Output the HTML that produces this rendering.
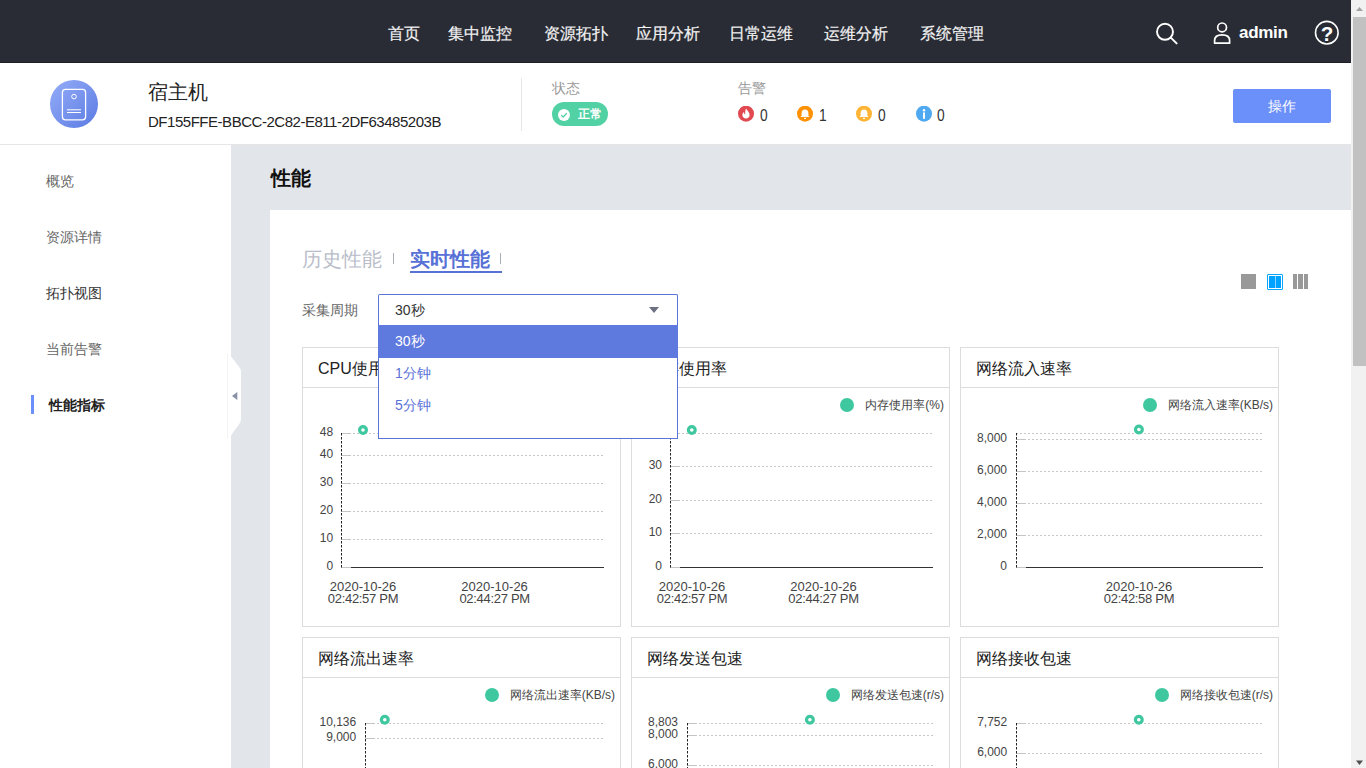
<!DOCTYPE html>
<html><head><meta charset="utf-8">
<style>
*{box-sizing:border-box;margin:0;padding:0}
html,body{width:1366px;height:768px;overflow:hidden;background:#fff;font-family:"Liberation Sans",sans-serif;color:#333}
.a{position:absolute;white-space:nowrap}
#nav{left:0;top:0;width:1351px;height:63px;background:#292c35;border-bottom:1px solid #1e2027;box-shadow:0 1px 2px rgba(0,0,0,0.06)}
.nv{top:23px;font-size:16px;line-height:21px;color:#f2f2f2;font-weight:400;-webkit-text-stroke:0.2px #f2f2f2}
#hdr{left:0;top:63px;width:1351px;height:82px;background:#fff;border-bottom:1px solid #e6e6e6}
#side{left:0;top:145px;width:231px;height:623px;background:#fff}
#main{left:231px;top:145px;width:1120px;height:623px;background:#e2e5ea}
.si{left:46px;font-size:14px;line-height:18px;color:#666}
#panel{left:270px;top:210px;width:1081px;height:558px;background:#fff}
.card{position:absolute;width:319px;height:280px;border:1px solid #dcdcdc;background:#fff}
.card .hd{position:absolute;left:0;top:0;width:317px;height:40px;border-bottom:1px solid #dcdcdc}
.card .tt{position:absolute;left:15px;top:10px;font-size:16px;line-height:21px;color:#222;white-space:nowrap}
.card svg{position:absolute;left:-1px;top:-1px}
#sb{left:1351px;top:0;width:15px;height:768px;background:#f1f1f1}

.leg{font-size:12px;line-height:16px;color:#444;display:flex;align-items:center}
.leg i{display:inline-block;width:14px;height:14px;border-radius:50%;background:#3fc8a0;margin-right:11px}
.yl{font-family:"Liberation Sans",sans-serif;font-size:12px;fill:#444}
.xl{font-family:"Liberation Sans",sans-serif;font-size:13px;fill:#444}
.xl2{font-family:"Liberation Sans",sans-serif;font-size:13px;fill:#444;letter-spacing:-0.3px}
</style></head><body>
<div id="nav" class="a"></div>
<div class="a nv" style="left:388px">首页</div>
<div class="a nv" style="left:448px">集中监控</div>
<div class="a nv" style="left:544px">资源拓扑</div>
<div class="a nv" style="left:636px">应用分析</div>
<div class="a nv" style="left:729px">日常运维</div>
<div class="a nv" style="left:824px">运维分析</div>
<div class="a nv" style="left:920px">系统管理</div>
<svg class="a" style="left:1150px;top:15px" width="40" height="35" viewBox="0 0 40 35">
<circle cx="15" cy="16.8" r="8" fill="none" stroke="#fff" stroke-width="1.9"/>
<line x1="20.8" y1="22.6" x2="26.6" y2="28.4" stroke="#fff" stroke-width="2" stroke-linecap="round"/>
</svg>
<svg class="a" style="left:1210px;top:15px" width="25" height="35" viewBox="0 0 25 35">
<circle cx="12.1" cy="12.4" r="4.4" fill="none" stroke="#fff" stroke-width="1.7"/>
<path d="M4.6 28.2 V25.5 C4.6 21.5 8 19.9 12.1 19.9 C16.2 19.9 19.6 21.5 19.6 25.5 V28.2 Z" fill="none" stroke="#fff" stroke-width="1.7" stroke-linejoin="round"/>
</svg>
<div class="a" style="left:1239px;top:23px;font-size:17px;line-height:20px;font-weight:700;color:#fff;letter-spacing:-0.3px">admin</div>
<svg class="a" style="left:1312px;top:18px" width="30" height="30" viewBox="0 0 30 30">
<circle cx="14.8" cy="14.7" r="11.3" fill="none" stroke="#fff" stroke-width="1.6"/>
<text x="14.9" y="22.7" text-anchor="middle" font-family="Liberation Sans" font-weight="700" font-size="20.5" fill="#fff">?</text>
</svg>

<div id="hdr" class="a"></div>
<div class="a" style="left:50px;top:80px;width:48px;height:48px;border-radius:50%;background:linear-gradient(135deg,#94acf8 0%,#5b7be2 100%)"></div>
<svg class="a" style="left:50px;top:80px" width="48" height="48" viewBox="0 0 48 48">
<rect x="12.4" y="9.4" width="23.2" height="30.4" rx="3" fill="none" stroke="#fff" stroke-width="1.3"/>
<circle cx="24" cy="16.6" r="2.3" fill="none" stroke="#fff" stroke-width="1"/>
<line x1="17" y1="29.8" x2="31" y2="29.8" stroke="#fff" stroke-width="1"/>
<line x1="17" y1="32.5" x2="31" y2="32.5" stroke="#fff" stroke-width="1"/>
</svg>
<div class="a" style="left:148px;top:79px;font-size:20px;line-height:26px;color:#222">宿主机</div>
<div class="a" style="left:148px;top:113px;font-size:15px;line-height:17px;color:#222;letter-spacing:-0.47px">DF155FFE-BBCC-2C82-E811-2DF63485203B</div>
<div class="a" style="left:521px;top:78px;width:1px;height:53px;background:#e6e6e6"></div>
<div class="a" style="left:552px;top:79px;font-size:14px;line-height:18px;color:#999">状态</div>
<div class="a" style="left:552px;top:102px;width:56px;height:24px;border-radius:12px;background:#52d1a4"></div>
<svg class="a" style="left:557px;top:108px" width="14" height="14" viewBox="0 0 14 14">
<circle cx="7" cy="7" r="6" fill="#fff"/>
<path d="M4.2 7.1 L6.2 9 L9.8 5.3" fill="none" stroke="#52d1a4" stroke-width="1.3"/>
</svg>
<div class="a" style="left:578px;top:106px;font-size:12px;line-height:16px;color:#fff;font-weight:700">正常</div>
<div class="a" style="left:738px;top:79px;font-size:14px;line-height:18px;color:#999">告警</div>
<svg class="a" style="left:738px;top:106px" width="220" height="16" viewBox="0 0 220 16">
<circle cx="8" cy="7.7" r="8" fill="#e04950"/>
<path d="M8 2.6 C9.6 5 11.6 6.4 11.6 9 C11.6 11.2 10 12.6 8 12.6 C6 12.6 4.4 11.2 4.4 9 C4.4 7.6 5.2 6.6 6 6 C6 7.4 6.6 8.2 7.2 8.4 C7 6.4 7.4 4.2 8 2.6 Z" fill="#fff"/>
<circle cx="67" cy="7.7" r="8" fill="#ff9103"/>
<path d="M67 3.4 C69.2 3.4 70.4 5 70.4 7.2 V9.8 L71.6 11 H62.4 L63.6 9.8 V7.2 C63.6 5 64.8 3.4 67 3.4 Z M65.8 11.8 H68.2 C68.2 12.6 67.6 13 67 13 C66.4 13 65.8 12.6 65.8 11.8Z" fill="#fff"/>
<circle cx="126" cy="7.7" r="8" fill="#feb435"/>
<path d="M126 3.4 C128.2 3.4 129.4 5 129.4 7.2 V9.8 L130.6 11 H121.4 L122.6 9.8 V7.2 C122.6 5 123.8 3.4 126 3.4 Z M124.8 11.8 H127.2 C127.2 12.6 126.6 13 126 13 C125.4 13 124.8 12.6 124.8 11.8Z" fill="#fff"/>
<circle cx="186" cy="7.7" r="8" fill="#4fa9f1"/>
<circle cx="186" cy="4.3" r="1.2" fill="#fff"/>
<rect x="185" y="6.4" width="2" height="6.4" fill="#fff"/>
</svg>
<div class="a" style="left:760px;top:107px;font-size:16px;line-height:18px;color:#333;transform:scaleX(0.86);transform-origin:0 0">0</div>
<div class="a" style="left:819px;top:107px;font-size:16px;line-height:18px;color:#333;transform:scaleX(0.86);transform-origin:0 0">1</div>
<div class="a" style="left:878px;top:107px;font-size:16px;line-height:18px;color:#333;transform:scaleX(0.86);transform-origin:0 0">0</div>
<div class="a" style="left:937px;top:107px;font-size:16px;line-height:18px;color:#333;transform:scaleX(0.86);transform-origin:0 0">0</div>
<div class="a" style="left:1233px;top:89px;width:98px;height:34px;border-radius:2px;background:#6c90f9;color:#fff;font-size:14px;line-height:34px;text-align:center">操作</div>

<div id="side" class="a"></div>
<div class="a si" style="top:172px">概览</div>
<div class="a si" style="top:228px">资源详情</div>
<div class="a si" style="top:284px;color:#333">拓扑视图</div>
<div class="a si" style="top:340px">当前告警</div>
<div class="a" style="left:31px;top:395px;width:3px;height:19px;background:#6c90f9"></div>
<div class="a si" style="left:49px;top:396px;color:#222;font-weight:700">性能指标</div>

<div id="main" class="a"></div>
<div class="a" style="left:227px;top:353px;width:1px;height:86px;background:#f4f4f4"></div>
<svg class="a" style="left:225px;top:350px" width="20" height="92" viewBox="0 0 20 92">
<path d="M6 6.5 L14.6 17.6 Q16 19.5 16 22 L16 69 Q16 71.5 14.6 73.4 L6 85.5 Z" fill="#fff"/>
<path d="M7 45.9 L12.3 41.9 L12.3 49.9 Z" fill="#8a91a6"/>
</svg>
<div class="a" style="left:271px;top:165px;font-size:20px;line-height:26px;font-weight:700;color:#111">性能</div>

<div id="panel" class="a"></div>
<div class="a" style="left:302px;top:246px;font-size:20px;line-height:26px;color:#b9bdc9">历史性能</div>
<div class="a" style="left:393px;top:253px;width:1px;height:11px;background:#a9adb8"></div>
<div class="a" style="left:410px;top:246px;font-size:20px;line-height:26px;color:#5871d6;font-weight:700">实时性能</div>
<div class="a" style="left:410px;top:271px;width:92px;height:2px;background:#5871d6"></div>
<div class="a" style="left:500px;top:253px;width:1px;height:11px;background:#a9adb8"></div>
<div class="a" style="left:1241px;top:274px;width:15px;height:15px;background:#999"></div>
<div class="a" style="left:1267px;top:274px;width:16px;height:16px;border:1px solid #0aa6ff;border-radius:1px;background:#fff"></div>
<div class="a" style="left:1269px;top:276px;width:6px;height:12px;background:#00a2ff"></div>
<div class="a" style="left:1276px;top:276px;width:5px;height:12px;background:#00a2ff"></div>
<div class="a" style="left:1275px;top:276px;width:1px;height:12px;background:#8fd3ff"></div>
<div class="a" style="left:1293px;top:274px;width:4px;height:15px;background:#999"></div>
<div class="a" style="left:1298px;top:274px;width:5px;height:15px;background:#999"></div>
<div class="a" style="left:1304px;top:274px;width:4px;height:15px;background:#999"></div>
<div class="a" style="left:302px;top:301px;font-size:14px;line-height:18px;color:#666">采集周期</div>
<div class="card" style="left:302px;top:347px"><div class="hd"></div><div class="tt">CPU使用率</div></div>
<div class="a leg" style="right:751px;top:397px"><i></i>CPU使用率(%)</div>
<div class="card" style="left:631px;top:347px"><div class="hd"></div><div class="tt">内存使用率</div></div>
<div class="a leg" style="right:422px;top:397px"><i></i>内存使用率(%)</div>
<div class="card" style="left:960px;top:347px"><div class="hd"></div><div class="tt">网络流入速率</div></div>
<div class="a leg" style="right:93px;top:397px"><i></i>网络流入速率(KB/s)</div>
<div class="card" style="left:302px;top:637px"><div class="hd"></div><div class="tt">网络流出速率</div></div>
<div class="a leg" style="right:751px;top:687px"><i></i>网络流出速率(KB/s)</div>
<div class="card" style="left:631px;top:637px"><div class="hd"></div><div class="tt">网络发送包速</div></div>
<div class="a leg" style="right:422px;top:687px"><i></i>网络发送包速(r/s)</div>
<div class="card" style="left:960px;top:637px"><div class="hd"></div><div class="tt">网络接收包速</div></div>
<div class="a leg" style="right:93px;top:687px"><i></i>网络接收包速(r/s)</div>
<svg class="a" style="left:0;top:0" width="1351" height="768" viewBox="0 0 1351 768">
<line x1="341" y1="433.5" x2="603" y2="433.5" stroke="#c8c8c8" stroke-width="1" stroke-dasharray="2 2"/>
<line x1="341" y1="433.5" x2="351" y2="433.5" stroke="#c4c4c4" stroke-width="1"/>
<text x="333.2" y="436" text-anchor="end" class="yl">48</text>
<line x1="341" y1="455.5" x2="603" y2="455.5" stroke="#c8c8c8" stroke-width="1" stroke-dasharray="2 2"/>
<line x1="341" y1="455.5" x2="351" y2="455.5" stroke="#c4c4c4" stroke-width="1"/>
<text x="333.2" y="458" text-anchor="end" class="yl">40</text>
<line x1="341" y1="483.5" x2="603" y2="483.5" stroke="#c8c8c8" stroke-width="1" stroke-dasharray="2 2"/>
<line x1="341" y1="483.5" x2="351" y2="483.5" stroke="#c4c4c4" stroke-width="1"/>
<text x="333.2" y="486" text-anchor="end" class="yl">30</text>
<line x1="341" y1="511.5" x2="603" y2="511.5" stroke="#c8c8c8" stroke-width="1" stroke-dasharray="2 2"/>
<line x1="341" y1="511.5" x2="351" y2="511.5" stroke="#c4c4c4" stroke-width="1"/>
<text x="333.2" y="514" text-anchor="end" class="yl">20</text>
<line x1="341" y1="539.5" x2="603" y2="539.5" stroke="#c8c8c8" stroke-width="1" stroke-dasharray="2 2"/>
<line x1="341" y1="539.5" x2="351" y2="539.5" stroke="#c4c4c4" stroke-width="1"/>
<text x="333.2" y="542" text-anchor="end" class="yl">10</text>
<line x1="341" y1="567.5" x2="351" y2="567.5" stroke="#c4c4c4" stroke-width="1"/>
<line x1="351" y1="567.5" x2="604" y2="567.5" stroke="#333" stroke-width="1.1"/>
<text x="333.2" y="570" text-anchor="end" class="yl">0</text>
<line x1="341.5" y1="433" x2="341.5" y2="568" stroke="#222" stroke-width="1" stroke-dasharray="2.5 1.5"/>
<text x="363" y="591" text-anchor="middle" class="xl">2020-10-26</text>
<text x="363" y="603" text-anchor="middle" class="xl2">02:42:57 PM</text>
<text x="494.6" y="591" text-anchor="middle" class="xl">2020-10-26</text>
<text x="494.6" y="603" text-anchor="middle" class="xl2">02:44:27 PM</text>
<circle cx="363" cy="430" r="3.4" fill="#fff" stroke="#3fc8a0" stroke-width="3.2"/>
<line x1="670" y1="433.5" x2="932" y2="433.5" stroke="#c8c8c8" stroke-width="1" stroke-dasharray="2 2"/>
<line x1="670" y1="433.5" x2="680" y2="433.5" stroke="#c4c4c4" stroke-width="1"/>
<text x="662" y="436" text-anchor="end" class="yl">40</text>
<line x1="670" y1="466.5" x2="932" y2="466.5" stroke="#c8c8c8" stroke-width="1" stroke-dasharray="2 2"/>
<line x1="670" y1="466.5" x2="680" y2="466.5" stroke="#c4c4c4" stroke-width="1"/>
<text x="662" y="469" text-anchor="end" class="yl">30</text>
<line x1="670" y1="500.5" x2="932" y2="500.5" stroke="#c8c8c8" stroke-width="1" stroke-dasharray="2 2"/>
<line x1="670" y1="500.5" x2="680" y2="500.5" stroke="#c4c4c4" stroke-width="1"/>
<text x="662" y="503" text-anchor="end" class="yl">20</text>
<line x1="670" y1="533.5" x2="932" y2="533.5" stroke="#c8c8c8" stroke-width="1" stroke-dasharray="2 2"/>
<line x1="670" y1="533.5" x2="680" y2="533.5" stroke="#c4c4c4" stroke-width="1"/>
<text x="662" y="536" text-anchor="end" class="yl">10</text>
<line x1="670" y1="567.5" x2="680" y2="567.5" stroke="#c4c4c4" stroke-width="1"/>
<line x1="680" y1="567.5" x2="933" y2="567.5" stroke="#333" stroke-width="1.1"/>
<text x="662" y="570" text-anchor="end" class="yl">0</text>
<line x1="670.5" y1="433" x2="670.5" y2="568" stroke="#222" stroke-width="1" stroke-dasharray="2.5 1.5"/>
<text x="692" y="591" text-anchor="middle" class="xl">2020-10-26</text>
<text x="692" y="603" text-anchor="middle" class="xl2">02:42:57 PM</text>
<text x="823.5" y="591" text-anchor="middle" class="xl">2020-10-26</text>
<text x="823.5" y="603" text-anchor="middle" class="xl2">02:44:27 PM</text>
<circle cx="691.8" cy="430" r="3.4" fill="#fff" stroke="#3fc8a0" stroke-width="3.2"/>
<line x1="1016" y1="433.5" x2="1262" y2="433.5" stroke="#c8c8c8" stroke-width="1" stroke-dasharray="2 2"/>
<line x1="1016" y1="439.5" x2="1262" y2="439.5" stroke="#c8c8c8" stroke-width="1" stroke-dasharray="2 2"/>
<line x1="1016" y1="439.5" x2="1026" y2="439.5" stroke="#c4c4c4" stroke-width="1"/>
<text x="1007" y="442" text-anchor="end" class="yl">8,000</text>
<line x1="1016" y1="471.5" x2="1262" y2="471.5" stroke="#c8c8c8" stroke-width="1" stroke-dasharray="2 2"/>
<line x1="1016" y1="471.5" x2="1026" y2="471.5" stroke="#c4c4c4" stroke-width="1"/>
<text x="1007" y="474" text-anchor="end" class="yl">6,000</text>
<line x1="1016" y1="503.5" x2="1262" y2="503.5" stroke="#c8c8c8" stroke-width="1" stroke-dasharray="2 2"/>
<line x1="1016" y1="503.5" x2="1026" y2="503.5" stroke="#c4c4c4" stroke-width="1"/>
<text x="1007" y="506" text-anchor="end" class="yl">4,000</text>
<line x1="1016" y1="535.5" x2="1262" y2="535.5" stroke="#c8c8c8" stroke-width="1" stroke-dasharray="2 2"/>
<line x1="1016" y1="535.5" x2="1026" y2="535.5" stroke="#c4c4c4" stroke-width="1"/>
<text x="1007" y="538" text-anchor="end" class="yl">2,000</text>
<line x1="1016" y1="567.5" x2="1026" y2="567.5" stroke="#c4c4c4" stroke-width="1"/>
<line x1="1026" y1="567.5" x2="1263" y2="567.5" stroke="#333" stroke-width="1.1"/>
<text x="1007" y="570" text-anchor="end" class="yl">0</text>
<line x1="1016.5" y1="433" x2="1016.5" y2="568" stroke="#222" stroke-width="1" stroke-dasharray="2.5 1.5"/>
<text x="1139" y="591" text-anchor="middle" class="xl">2020-10-26</text>
<text x="1139" y="603" text-anchor="middle" class="xl2">02:42:58 PM</text>
<circle cx="1138.9" cy="429.5" r="3.4" fill="#fff" stroke="#3fc8a0" stroke-width="3.2"/>
<line x1="365" y1="723.5" x2="604" y2="723.5" stroke="#c8c8c8" stroke-width="1" stroke-dasharray="2 2"/>
<line x1="365" y1="723.5" x2="375" y2="723.5" stroke="#c4c4c4" stroke-width="1"/>
<text x="356.2" y="726" text-anchor="end" class="yl">10,136</text>
<line x1="365" y1="738.5" x2="604" y2="738.5" stroke="#c8c8c8" stroke-width="1" stroke-dasharray="2 2"/>
<line x1="365" y1="738.5" x2="375" y2="738.5" stroke="#c4c4c4" stroke-width="1"/>
<text x="356.2" y="741" text-anchor="end" class="yl">9,000</text>
<line x1="365.5" y1="723" x2="365.5" y2="768" stroke="#222" stroke-width="1" stroke-dasharray="2.5 1.5"/>
<circle cx="384.8" cy="719.7" r="3.4" fill="#fff" stroke="#3fc8a0" stroke-width="3.2"/>
<line x1="687" y1="723.5" x2="933" y2="723.5" stroke="#c8c8c8" stroke-width="1" stroke-dasharray="2 2"/>
<line x1="687" y1="723.5" x2="697" y2="723.5" stroke="#c4c4c4" stroke-width="1"/>
<text x="678" y="726" text-anchor="end" class="yl">8,803</text>
<line x1="687" y1="735.5" x2="933" y2="735.5" stroke="#c8c8c8" stroke-width="1" stroke-dasharray="2 2"/>
<line x1="687" y1="735.5" x2="697" y2="735.5" stroke="#c4c4c4" stroke-width="1"/>
<text x="678" y="738" text-anchor="end" class="yl">8,000</text>
<line x1="687" y1="765.5" x2="933" y2="765.5" stroke="#c8c8c8" stroke-width="1" stroke-dasharray="2 2"/>
<line x1="687" y1="765.5" x2="697" y2="765.5" stroke="#c4c4c4" stroke-width="1"/>
<text x="678" y="768" text-anchor="end" class="yl">6,000</text>
<line x1="687.5" y1="723" x2="687.5" y2="768" stroke="#222" stroke-width="1" stroke-dasharray="2.5 1.5"/>
<circle cx="809.9" cy="719.8" r="3.4" fill="#fff" stroke="#3fc8a0" stroke-width="3.2"/>
<line x1="1016" y1="723.5" x2="1262" y2="723.5" stroke="#c8c8c8" stroke-width="1" stroke-dasharray="2 2"/>
<line x1="1016" y1="723.5" x2="1026" y2="723.5" stroke="#c4c4c4" stroke-width="1"/>
<text x="1007.2" y="726" text-anchor="end" class="yl">7,752</text>
<line x1="1016" y1="753.5" x2="1262" y2="753.5" stroke="#c8c8c8" stroke-width="1" stroke-dasharray="2 2"/>
<line x1="1016" y1="753.5" x2="1026" y2="753.5" stroke="#c4c4c4" stroke-width="1"/>
<text x="1007.2" y="756" text-anchor="end" class="yl">6,000</text>
<line x1="1016.5" y1="723" x2="1016.5" y2="768" stroke="#222" stroke-width="1" stroke-dasharray="2.5 1.5"/>
<circle cx="1138.8" cy="719.7" r="3.4" fill="#fff" stroke="#3fc8a0" stroke-width="3.2"/>
</svg>
<div class="a" style="left:378px;top:294px;width:300px;height:32px;border:1px solid #5b74d9;border-bottom:none;border-radius:2px 2px 0 0;background:#fff"></div>
<div class="a" style="left:395px;top:301px;font-size:14px;line-height:18px;color:#333">30秒</div>
<svg class="a" style="left:649px;top:307px" width="10" height="6" viewBox="0 0 10 6"><path d="M0 0 H10 L5 6 Z" fill="#6b7082"/></svg>
<div class="a" style="left:378px;top:325px;width:300px;height:114px;border:1px solid #5b74d9;border-top:none;background:#fff"></div>
<div class="a" style="left:378px;top:325px;width:300px;height:33px;background:#5f7ade"></div>
<div class="a" style="left:395px;top:332px;font-size:14px;line-height:18px;color:#fff">30秒</div>
<div class="a" style="left:395px;top:364px;font-size:14px;line-height:18px;color:#5a72d8">1分钟</div>
<div class="a" style="left:395px;top:396px;font-size:14px;line-height:18px;color:#5a72d8">5分钟</div>
<div id="sb" class="a"></div>
<div class="a" style="left:1353px;top:17px;width:13px;height:349px;background:#c1c1c1"></div>
<svg class="a" style="left:1351px;top:0" width="15" height="17" viewBox="0 0 15 17"><path d="M5 11 L8.5 7 L12 11 Z" fill="#a3a3a3"/></svg>
<svg class="a" style="left:1351px;top:751px" width="15" height="17" viewBox="0 0 15 17"><path d="M5 9.5 L12 9.5 L8.5 14 Z" fill="#505050"/></svg>
</body></html>
